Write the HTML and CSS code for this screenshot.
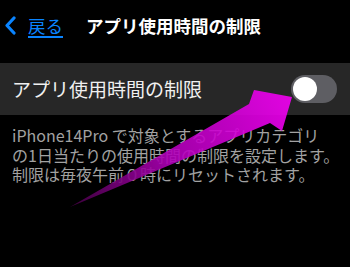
FILE: index.html
```html
<!DOCTYPE html>
<html lang="ja">
<head>
<meta charset="utf-8">
<link rel="stylesheet" href="styles.css">
</head>
<body>
<div class="screen">
  <header class="nav">
    <a class="back" href="#">
      <svg class="chevron" width="11" height="19" viewBox="0 0 11 19"><polyline points="9,2 2,9.5 9,17" fill="none" stroke="#0a84ff" stroke-width="3.2" stroke-linecap="round" stroke-linejoin="round"/></svg>
      <span class="back-label">戻る</span>
    </a>
    <h1 class="title">アプリ使用時間の制限</h1>
  </header>
  <section class="row">
    <span class="row-label">アプリ使用時間の制限</span>
    <span class="toggle"><span class="knob"></span></span>
  </section>
  <p class="note">iPhone14Pro で対象とするアプリカテゴリ<br>の1日当たりの使用時間の制限を設定します。<br>制限は毎夜午前０時にリセットされます。</p>
  <svg class="arrow" width="350" height="267" viewBox="0 0 350 267">
    <defs>
      <linearGradient id="g" x1="70" y1="207" x2="290" y2="100" gradientUnits="userSpaceOnUse">
        <stop offset="0" stop-color="#400040"/>
        <stop offset="0.45" stop-color="#b000b8"/>
        <stop offset="1" stop-color="#f400f4"/>
      </linearGradient>
    </defs>
    <polygon points="70,207 249,104 254,90 292,97 282,131 270,123" fill="url(#g)" opacity="0.9"/>
  </svg>
</div>
</body>
</html>
```
FILE: styles.css
```css
* { box-sizing: border-box; }
html, body {
  margin: 0;
  padding: 0;
  background: #000;
}
body {
  font-family: "Noto Sans CJK JP", "Noto Sans", sans-serif;
  width: 350px;
  height: 267px;
  overflow: hidden;
}
.screen {
  position: relative;
  width: 350px;
  height: 267px;
}
.nav {
  display: flex;
  align-items: center;
  height: 51px;
  padding-left: 5px;
}
.back {
  display: flex;
  align-items: center;
  color: #0a84ff;
  text-decoration: none;
}
.chevron { display: block; }
.back-label {
  margin-left: 12px;
  font-size: 17.5px;
  line-height: 20px;
  text-decoration: underline;
  text-underline-offset: 3px;
  text-decoration-thickness: 1.5px;
}
.title {
  margin: 0 0 0 23px;
  font-size: 17.5px;
  line-height: 20px;
  font-weight: 700;
  color: #fff;
}
.row {
  margin-top: 12px;
  height: 52px;
  background: #272727;
  display: flex;
  align-items: center;
  justify-content: space-between;
  padding: 0 13px 0 12px;
}
.row-label {
  font-size: 19px;
  line-height: 22px;
  color: #f0f0f0;
}
.toggle {
  width: 46px;
  height: 28px;
  border-radius: 14px;
  background: #5e5e63;
  padding: 2px;
  display: flex;
}
.knob {
  width: 24px;
  height: 24px;
  border-radius: 50%;
  background: #fff;
}
.note {
  margin: 11px 0 0 12px;
  font-size: 16px;
  line-height: 19.5px;
  color: #a2a2a2;
  white-space: nowrap;
}
.arrow {
  position: absolute;
  left: 0;
  top: 0;
  pointer-events: none;
}
```
